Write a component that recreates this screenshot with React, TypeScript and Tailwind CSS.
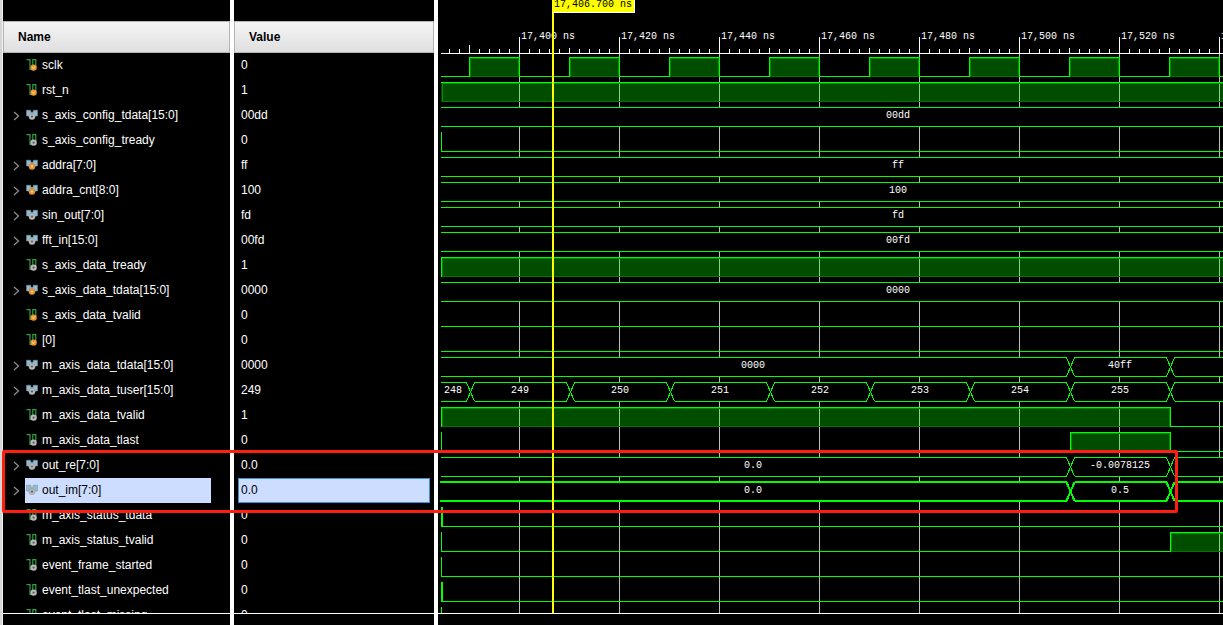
import React from 'react';

type Segment = { from: number; to: number; label?: string; labelX?: number };

interface Signal {
  name: string;
  value: string;
  kind: 'bit' | 'bus';
  source: 'input' | 'output';
  selected?: boolean;
  // logic signals: intervals where the level is high
  high?: [number, number][];
  // logic signals: width of the edge drawn at the left side of the view
  edge?: number;
  segments?: Segment[];
}

const ROW = 25;
const TOP = 53;
const LEFT = 3;
const END = 1000;
const BOTTOM = 613;

const constant = (label: string): Segment[] => [{ from: LEFT, to: END, label, labelX: 460 }];

const result = (before: string, label: string): Segment[] => [
  { from: LEFT, to: 632, label: before, labelX: 315 },
  { from: 632, to: 732, label, labelX: 682 },
  { from: 732, to: END },
];

const clock: [number, number][] = [0, 1, 2, 3, 4, 5, 6, 7].map((i) => [31 + i * 100, 81 + i * 100]);

const userSegments: Segment[] = [
  { from: LEFT, to: 32, label: '248', labelX: 15 },
  ...[249, 250, 251, 252, 253, 254, 255].map((n, i) => ({
    from: 32 + i * 100,
    to: 132 + i * 100,
    label: String(n),
    labelX: 82 + i * 100,
  })),
  { from: 732, to: END },
];

const signals: Signal[] = [
  { name: 'sclk', value: '0', kind: 'bit', source: 'input', high: clock },
  { name: 'rst_n', value: '1', kind: 'bit', source: 'input', high: [[LEFT, END]] },
  { name: 's_axis_config_tdata[15:0]', value: '00dd', kind: 'bus', source: 'output', segments: constant('00dd') },
  { name: 's_axis_config_tready', value: '0', kind: 'bit', source: 'output', edge: 1 },
  { name: 'addra[7:0]', value: 'ff', kind: 'bus', source: 'input', segments: constant('ff') },
  { name: 'addra_cnt[8:0]', value: '100', kind: 'bus', source: 'input', segments: constant('100') },
  { name: 'sin_out[7:0]', value: 'fd', kind: 'bus', source: 'output', segments: constant('fd') },
  { name: 'fft_in[15:0]', value: '00fd', kind: 'bus', source: 'output', segments: constant('00fd') },
  { name: 's_axis_data_tready', value: '1', kind: 'bit', source: 'output', high: [[LEFT, END]], edge: 1 },
  { name: 's_axis_data_tdata[15:0]', value: '0000', kind: 'bus', source: 'input', segments: constant('0000') },
  { name: 's_axis_data_tvalid', value: '0', kind: 'bit', source: 'input' },
  { name: '[0]', value: '0', kind: 'bit', source: 'input' },
  { name: 'm_axis_data_tdata[15:0]', value: '0000', kind: 'bus', source: 'output', segments: result('0000', '40ff') },
  { name: 'm_axis_data_tuser[15:0]', value: '249', kind: 'bus', source: 'output', segments: userSegments },
  { name: 'm_axis_data_tvalid', value: '1', kind: 'bit', source: 'output', high: [[LEFT, 732]], edge: 1 },
  { name: 'm_axis_data_tlast', value: '0', kind: 'bit', source: 'output', high: [[632, 732]], edge: 1 },
  { name: 'out_re[7:0]', value: '0.0', kind: 'bus', source: 'output', segments: result('0.0', '-0.0078125') },
  { name: 'out_im[7:0]', value: '0.0', kind: 'bus', source: 'output', selected: true, segments: result('0.0', '0.5') },
  { name: 'm_axis_status_tdata', value: '0', kind: 'bit', source: 'output', edge: 2 },
  { name: 'm_axis_status_tvalid', value: '0', kind: 'bit', source: 'output', high: [[732, END]], edge: 1 },
  { name: 'event_frame_started', value: '0', kind: 'bit', source: 'output', edge: 1 },
  { name: 'event_tlast_unexpected', value: '0', kind: 'bit', source: 'output', edge: 2 },
  { name: 'event_tlast_missing', value: '0', kind: 'bit', source: 'output', edge: 1 },
];

const SignalIcon: React.FC<{ kind: Signal['kind']; source: Signal['source'] }> = ({ kind, source }) => {
  const fill = source === 'input' ? '#f0922b' : '#b9b9b9';
  const dot = source === 'input' ? '#ffd9a0' : '#5a5a5a';

  if (kind === 'bit') {
    return (
      <svg width="12" height="12" viewBox="0 0 12 12" className="shrink-0" aria-hidden="true">
        <path d="M0.5 0.6H4V10.5H6.8V0.6H9.8V7" fill="none" stroke="#2fa044" strokeWidth="1.2" />
        <circle cx="7.6" cy="8.6" r="3.2" fill={fill} />
        {source === 'input' ? (
          <path d="M6.2 7.5L7.4 10L9 7.2" fill="none" stroke={dot} strokeWidth="0.8" />
        ) : (
          <circle cx="7.6" cy="8.6" r="1.1" fill={dot} />
        )}
      </svg>
    );
  }

  return (
    <svg width="12" height="12" viewBox="0 0 12 12" className="shrink-0" aria-hidden="true">
      <path d="M0.5 1.2H4.8V3.2H7.2V1.2H11.5V7H9.5L8 8.5H4L2.5 7H0.5Z" fill="#8fbcd4" stroke="#7a8d99" strokeWidth="0.5" />
      <circle cx="6" cy="7.5" r="3.2" fill={fill} stroke="#777777" strokeWidth="0.3" />
      <circle cx="6" cy="7.5" r="1.1" fill={dot} />
    </svg>
  );
};

const LogicWave: React.FC<{ signal: Signal; y: number }> = ({ signal, y }) => {
  const high = signal.high ?? [];
  const top = y + 4;
  const bottom = y + 23;
  let path = '';
  let x = LEFT;

  high.forEach(([from, to]) => {
    if (from > x) {
      path += `M${x} ${bottom + 0.5}H${from + 0.5}V${top + 0.5}H${to + 0.5}`;
    } else {
      path += `M${from} ${top + 0.5}H${to + 0.5}`;
    }
    if (to < END) {
      path += `V${bottom + 0.5}`;
    }
    x = to;
  });
  if (x < END) {
    path += `M${x} ${bottom + 0.5}H${END}`;
  }

  return (
    <g>
      {high.map(([from, to]) => (
        <g key={from}>
          <rect x={from} y={top} width={to - from} height={20} fill="#00ff00" fillOpacity="0.3" />
          <rect x={from + 1.5} y={top + 1.5} width={to - from - 2} height={18} fill="none" stroke="#008a00" />
        </g>
      ))}
      <path d={path} fill="none" stroke="#00ff00" />
      {high.map(([from, to]) => (
        <path key={from} d={`M${from + 1} ${bottom + 0.5}H${to}`} stroke="#007800" />
      ))}
      {signal.edge && <rect x={LEFT} y={top} width={signal.edge} height={20} fill="#00ff00" />}
    </g>
  );
};

const BusWave: React.FC<{ signal: Signal; y: number }> = ({ signal, y }) => {
  const segments = signal.segments ?? [];
  const shift = signal.selected ? 0 : 0.5;
  const top = y + 4 + shift;
  const bottom = y + 23 + shift;
  const start = signal.selected ? 2 : LEFT;

  return (
    <g>
      <rect x={LEFT} y={top} width={END} height={19} fill="#000000" />
      {segments.map(({ from, to, label, labelX }) => {
        const left = from === LEFT ? start : from + 4.5;
        const right = to === END ? END : to - 3.5;
        return (
          <g key={from}>
            <path
              d={`M${left} ${top}H${right}M${left} ${bottom}H${right}${
                to === END ? '' : `M${right} ${top}l8 19M${right} ${bottom}l8 -19`
              }`}
              fill="none"
              stroke="#00ff00"
              strokeWidth={signal.selected ? 2 : 1}
            />
            {label && (
              <text x={labelX} y={y + 15} textAnchor="middle" fill="#ffffff">
                {label}
              </text>
            )}
          </g>
        );
      })}
    </g>
  );
};

const Waveform: React.FC = () => {
  const majors = [0, 1, 2, 3, 4, 5, 6, 7];
  const ticks = Array.from({ length: 80 }, (_, i) => 11 + i * 10);

  return (
    <svg
      className="h-full min-w-0 flex-1 font-['Liberation_Mono',monospace] text-[10px]"
      role="img"
      aria-label="Waveform"
      shapeRendering="crispEdges"
    >
      {/* Time ruler */}
      {majors.map((i) => (
        <g key={i}>
          <rect x={81 + i * 100} y={TOP} width={1} height={BOTTOM - TOP} fill="#bfbfbf" />
          <rect x={81 + i * 100} y={37} width={1} height={17} fill="#ffffff" />
          <text x={83 + i * 100} y={39} fill="#ffffff">
            {`${(17400 + i * 20).toLocaleString('en-US')} ns`}
          </text>
        </g>
      ))}
      {ticks.map((x) => {
        const mid = (x - 31) % 100 === 0;
        const y = x === 31 ? 45 : mid ? 48 : 49;
        return <rect key={x} x={x} y={y} width={1} height={TOP - y} fill="#ffffff" />;
      })}
      <rect x={LEFT} y={TOP} width="100%" height={1} fill="#ffffff" />

      {/* Signals */}
      {signals.map((signal, i) =>
        signal.kind === 'bus' ? (
          <BusWave key={signal.name} signal={signal} y={TOP + i * ROW} />
        ) : (
          <LogicWave key={signal.name} signal={signal} y={TOP + i * ROW} />
        )
      )}

      {/* Cursor */}
      <rect x={114} y={0} width={2} height={BOTTOM} fill="#ffff00" />
      <rect x={114} y={0} width={83} height={13} fill="#ffffff" />
      <rect x={114} y={0} width={82} height={12} fill="#ffff00" />
      <text x={116} y={7} fill="#000000">
        17,406.700 ns
      </text>
    </svg>
  );
};

const SignalTable: React.FC = () => (
  <table className="w-[435px] shrink-0 table-fixed border-separate border-spacing-0 self-start text-left text-xs text-white">
    <colgroup>
      <col className="w-[231px]" />
      <col className="w-[204px]" />
    </colgroup>
    <thead>
      <tr className="h-[21px]" aria-hidden="true">
        <td className="border-r-4 border-white p-0" />
        <td className="border-r-4 border-white p-0" />
      </tr>
      <tr className="h-8 text-black">
        <th className="border-r-4 border-white p-0 font-bold">
          <div className="flex h-8 items-center border border-[#b4b4b4] bg-linear-to-b from-[#f5f5f5] to-[#dfdfe1] pl-3.5">
            Name
          </div>
        </th>
        <th className="border-r-4 border-white p-0 font-bold">
          <div className="flex h-8 items-center border border-[#b4b4b4] bg-linear-to-b from-[#f5f5f5] to-[#dfdfe1] pl-3.5">
            Value
          </div>
        </th>
      </tr>
    </thead>
    <tbody>
      {signals.map((signal) => (
        <tr key={signal.name} className="h-[25px]">
          <td className="border-r-4 border-white p-0">
            <div className="flex h-[25px] items-center">
              <div className="flex w-[22px] shrink-0 justify-center pl-1">
                {signal.kind === 'bus' && (
                  <button type="button" aria-label={`Expand ${signal.name}`} className="block">
                    <svg width="7" height="10" viewBox="0 0 7 10" aria-hidden="true">
                      <path d="M1 1L5.5 5L1 9" fill="none" stroke="#8c8c8c" strokeWidth="1.3" />
                    </svg>
                  </button>
                )}
              </div>
              <div
                className={`flex h-full w-[186px] items-center gap-1 pb-0.5 pl-px ${
                  signal.selected ? 'bg-[#ccddff] text-black' : ''
                }`}
              >
                <SignalIcon kind={signal.kind} source={signal.source} />
                <span className="whitespace-nowrap">{signal.name}</span>
              </div>
            </div>
          </td>
          <td className="border-r-4 border-white p-0">
            <div
              className={`mx-1 flex h-[25px] items-center border pb-0.5 pl-0.5 ${
                signal.selected ? 'border-[#3d8fd9] bg-[#ccddff] text-black' : 'border-transparent'
              }`}
            >
              {signal.value}
            </div>
          </td>
        </tr>
      ))}
    </tbody>
  </table>
);

export default function App() {
  return (
    <main className="relative flex h-screen overflow-hidden bg-black font-['Liberation_Sans',sans-serif]">
      <div className="w-[3px] shrink-0 border-r border-[#f0f0f0] bg-[#d6d6d6]" />
      <div className="flex min-w-0 flex-1 flex-col">
        <div className="flex min-h-0 flex-1 overflow-hidden">
          <SignalTable />
          <Waveform />
        </div>
        <div className="flex h-3 shrink-0 border-t border-white">
          <div className="w-[231px] border-r-4 border-white" />
          <div className="w-[204px] border-r-4 border-white" />
        </div>
      </div>

      {/* Highlight around the FFT outputs */}
      <div className="pointer-events-none absolute top-[450px] left-[2px] h-[63px] w-[1176px] rounded-xs border-3 border-[#ff1e10]" />
    </main>
  );
}
